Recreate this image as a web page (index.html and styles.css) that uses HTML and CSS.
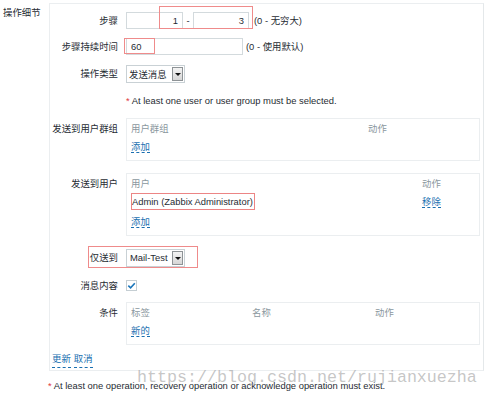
FILE: index.html
```html
<!DOCTYPE html>
<html lang="zh-CN">
<head>
    <meta charset="UTF-8">
    <meta name="viewport" content="width=device-width, initial-scale=1.0">
    <title>操作细节</title>
    <link rel="stylesheet" href="styles.css">
</head>
<body>
    <div class="page">
        <div class="section">
            <div class="section-label">操作细节</div>
            <div class="panel">
                <!-- 步骤 -->
                <div class="row row-steps">
                    <div class="row-label">步骤</div>
                    <div class="row-field">
                        <input type="text" class="input input-from" value="1">
                        <span class="dash">-</span>
                        <input type="text" class="input input-to" value="3">
                        <span class="hint hint-steps">(0 - 无穷大)</span>
                        <span class="mark mark-steps"></span>
                    </div>
                </div>
                <div class="row row-duration">
                    <div class="row-label">步骤持续时间</div>
                    <div class="row-field">
                        <input type="text" class="input input-duration" value="60">
                        <span class="hint">(0 - 使用默认)</span>
                        <span class="mark mark-duration"></span>
                    </div>
                </div>
                <div class="row row-type">
                    <div class="row-label">操作类型</div>
                    <div class="row-field">
                        <div class="select"><span class="select-text">发送消息</span><span class="select-btn"></span></div>
                    </div>
                </div>
                <div class="row row-note">
                    <div class="row-label"></div>
                    <div class="row-field">
                        <span><span class="req">*</span> At least one user or user group must be selected.</span>
                    </div>
                </div>
                <!-- 用户群组 -->
                <div class="row row-groups">
                    <div class="row-label box-label">发送到用户群组</div>
                    <div class="row-field">
                        <div class="box box-groups">
                            <div class="box-head"><span>用户群组</span><span>动作</span></div>
                            <div class="box-link"><a href="#" class="link">添加</a></div>
                        </div>
                    </div>
                </div>
                <!-- 用户 -->
                <div class="row row-users">
                    <div class="row-label box-label">发送到用户</div>
                    <div class="row-field">
                        <div class="box box-users">
                            <div class="box-head"><span>用户</span><span>动作</span></div>
                            <div class="box-item">
                                <span class="user-name">Admin (Zabbix Administrator)</span>
                                <span><a href="#" class="link">移除</a></span>
                            </div>
                            <div class="box-link box-link-users"><a href="#" class="link">添加</a></div>
                        </div>
                    </div>
                </div>
                <div class="row row-media">
                    <div class="row-label">仅送到</div>
                    <div class="row-field">
                        <div class="select"><span class="select-text select-latin">Mail-Test</span><span class="select-btn"></span></div>
                    </div>
                    <span class="mark mark-media"></span>
                </div>
                <div class="row row-message">
                    <div class="row-label">消息内容</div>
                    <div class="row-field">
                        <span class="checkbox">
                            <svg width="9" height="9" viewBox="0 0 9 9"><path d="M1.3 4.6 L3.6 6.8 L7.8 2.2" fill="none" stroke="#1b76bb" stroke-width="1.6"/></svg>
                        </span>
                    </div>
                </div>
                <!-- 条件 -->
                <div class="row row-conditions">
                    <div class="row-label box-label">条件</div>
                    <div class="row-field">
                        <div class="box box-conditions">
                            <div class="box-head"><span>标签</span><span>名称</span><span>动作</span></div>
                            <div class="box-link"><a href="#" class="link">新的</a></div>
                        </div>
                    </div>
                </div>
                <div class="actions">
                    <a href="#" class="link">更新</a>
                    <a href="#" class="link">取消</a>
                </div>
            </div>
        </div>
        <p class="footnote"><span class="req">*</span> At least one operation, recovery operation or acknowledge operation must exist.</p>
        <div class="watermark">https://blog.csdn.net/rujianxuezha</div>
    </div>
</body>
</html>
```

FILE: styles.css
```css
body {
    margin: 0;
    padding: 0;
    background-color: #ffffff;
    color: #1f2c33;
    font-family: "Liberation Sans", Arial, "Noto Sans CJK SC", sans-serif;
    font-size: 9.4px;
}
.page {
    position: relative;
    width: 487px;
    height: 396px;
    padding-top: 3px;
    box-sizing: border-box;
    overflow: hidden;
}
.section {
    display: flex;
}
.section-label {
    width: 46px;
    padding-left: 3px;
    margin-top: 1px;
    line-height: 17px;
}
.panel {
    width: 435px;
    height: 368px;
    box-sizing: border-box;
    border: 1px solid #ebeef0;
    border-right-color: #e4e8ea;
    padding: 8px 2px 0 0;
}
.row {
    position: relative;
    display: flex;
    align-items: flex-start;
}
.row-label {
    width: 68px;
    margin-right: 8px;
    text-align: right;
    line-height: 17px;
    white-space: nowrap;
}
.box-label {
    padding-top: 2px;
}
.row-field {
    position: relative;
    display: flex;
    align-items: center;
    width: 354px;
    min-height: 17px;
    line-height: 17px;
}
.row-duration { margin-top: 9px; }
.row-type { margin-top: 10px; }
.row-note { margin-top: 9px; }
.row-groups { margin-top: 9px; }
.row-users { margin-top: 12px; }
.row-media { margin-top: 13px; }
.row-message { margin-top: 10px; }
.row-conditions { margin-top: 8px; }

.input {
    height: 17px;
    box-sizing: border-box;
    border: 1px solid #d3dadd;
    padding: 0 4px;
    font: inherit;
    color: #1f2c33;
    background: #fff;
    outline: none;
}
.input-from {
    width: 57px;
    text-align: right;
}
.input-to {
    width: 56px;
    text-align: right;
}
.input-duration {
    width: 117px;
    padding-left: 4px;
}
.dash {
    width: 10px;
    text-align: center;
}
.hint {
    margin-left: 3px;
}
.hint-steps {
    margin-left: 5px;
}
.select {
    display: flex;
    width: 59px;
    height: 18px;
    box-sizing: border-box;
    border: 1px solid #c9d1d5;
    background: #fff;
}
.select-text {
    flex: 1;
    padding-left: 2px;
    line-height: 16px;
    font-family: "Noto Sans CJK SC", sans-serif;
}
.select-latin {
    padding-left: 3px;
    font-family: "Liberation Sans", Arial, sans-serif;
}
.select-btn {
    position: relative;
    width: 11px;
    height: 14px;
    margin: 1px 1px 0 0;
    box-sizing: border-box;
    border: 1px solid #8e9396;
    background: linear-gradient(#f4f4f4, #d6d6d6);
}
.select-btn::after {
    content: "";
    position: absolute;
    left: 2px;
    top: 5px;
    border-left: 3px solid transparent;
    border-right: 3px solid transparent;
    border-top: 3px solid #111;
}
.req {
    color: #e0373c;
}
.box {
    width: 354px;
    box-sizing: border-box;
    border: 1px solid #ebeef0;
    padding: 3px 4px 6px 4px;
    line-height: 14px;
}
.box-head {
    display: grid;
    color: #8a979e;
}
.box-groups .box-head {
    grid-template-columns: 237px 1fr;
}
.box-users .box-head,
.box-users .box-item {
    display: grid;
    grid-template-columns: 291px 1fr;
}
.box-conditions .box-head {
    grid-template-columns: 121px 123px 1fr;
}
.box-link {
    margin-top: 4px;
}
.box-item {
    margin-top: 2px;
    align-items: center;
}
.user-name {
    justify-self: start;
    height: 17px;
    box-sizing: border-box;
    line-height: 15px;
    padding: 0 1px 0 0;
    border: 1px solid #ec8585;
}
.box-link-users {
    margin-top: 5px;
}
.link {
    color: #1a6fb0;
    text-decoration: none;
    border-bottom: 1px dashed #1a6fb0;
}
.checkbox {
    display: flex;
    align-items: center;
    justify-content: center;
    width: 11px;
    height: 11px;
    box-sizing: border-box;
    border: 1px solid #c5ced3;
    background: #fff;
}
.actions {
    display: flex;
    gap: 3px;
    margin-top: 5px;
    padding-left: 2px;
    line-height: 17px;
}
.footnote {
    margin: 6px 0 0 48px;
    line-height: 17px;
}
/* rode kaders uit de annotatie */
.mark {
    position: absolute;
    box-sizing: border-box;
    border: 1px solid #ef8b8b;
    pointer-events: none;
}
.mark-steps {
    left: 33px;
    top: -6px;
    width: 94px;
    height: 23px;
}
.mark-duration {
    left: -2px;
    top: 0;
    width: 31px;
    height: 16px;
}
.mark-media {
    left: 38px;
    top: -3px;
    width: 110px;
    height: 22px;
}
.watermark {
    position: absolute;
    left: 137px;
    top: 368px;
    font-family: "Liberation Mono", monospace;
    font-size: 16.67px;
    line-height: 20px;
    color: rgba(150, 150, 150, 0.55);
    white-space: nowrap;
}
```
